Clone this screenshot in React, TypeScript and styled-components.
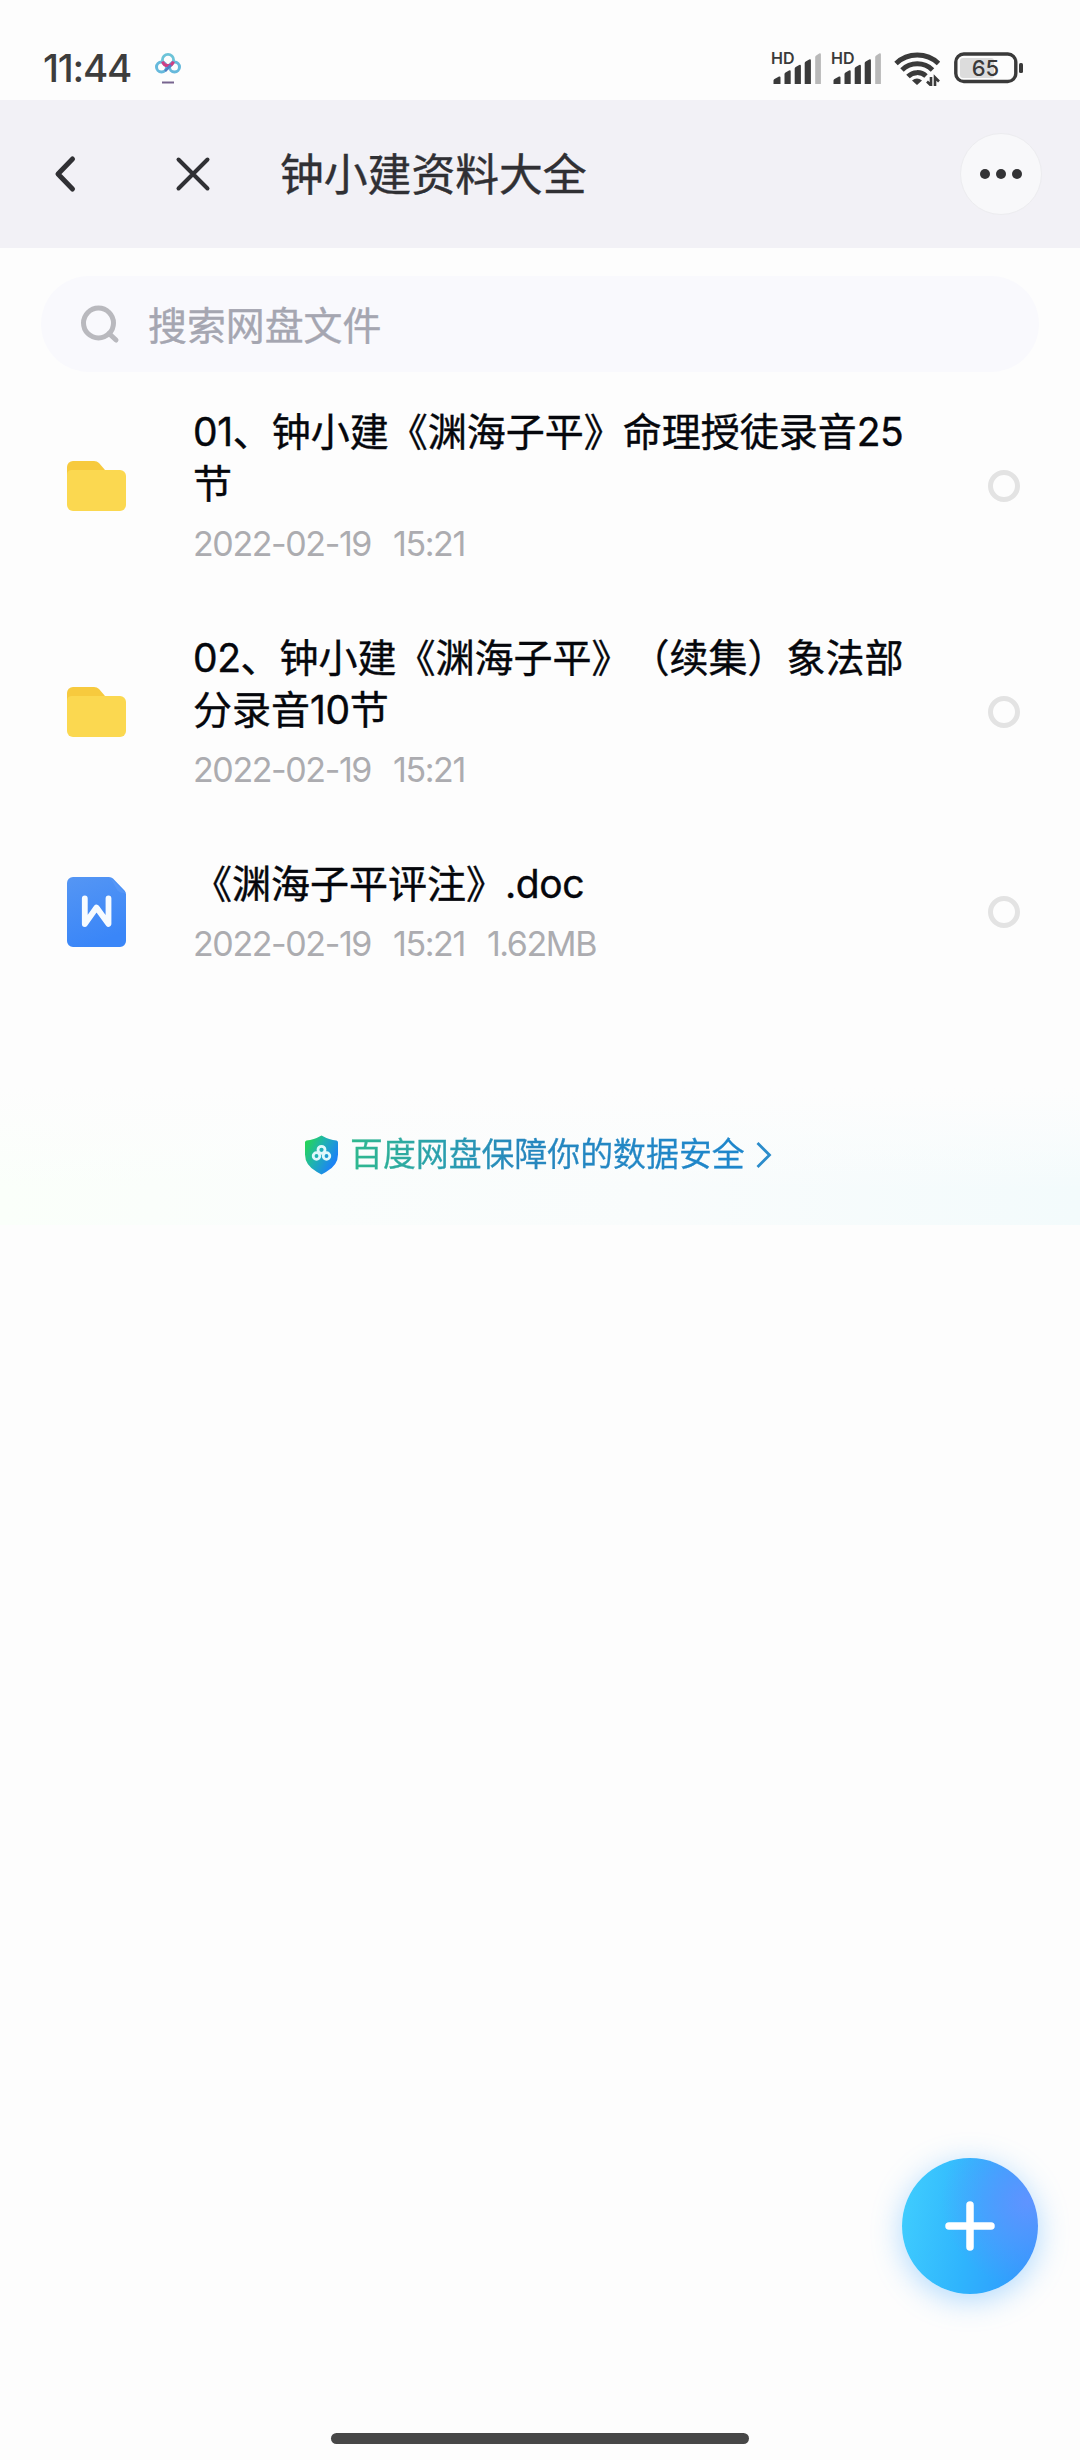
import React from "react";
import styled, { createGlobalStyle } from "styled-components";

const GlobalStyle = createGlobalStyle`
  * { box-sizing: border-box; }
  html, body { margin: 0; padding: 0; background: #fdfdfd; }
`;

const cjk = `"Noto Sans CJK SC", sans-serif`;

const Screen = styled.div`
  width: 1080px;
  height: 2460px;
  display: flex;
  flex-direction: column;
  background: #fdfdfd;
  font-family: ${cjk};
  text-spacing-trim: space-all;
  position: relative;
  overflow: hidden;
`;

const StatusBar = styled.div`
  height: 100px;
  flex: none;
  display: flex;
  align-items: flex-start;
  justify-content: space-between;
  padding: 48px 56px 0 43px;
`;

const StatusGroup = styled.div<{ $gap: number }>`
  display: flex;
  align-items: center;
  gap: ${(p) => p.$gap}px;
  height: 40px;
`;

const Clock = styled.span`
  font: 500 38.5px/40px Inter, sans-serif;
  letter-spacing: -1.2px;
  color: #3d3d3d;
  width: 91px;
  white-space: nowrap;
`;

const Header = styled.header`
  height: 148px;
  flex: none;
  display: flex;
  align-items: center;
  background: #f2f1f6;
  padding: 0 38px 0 45px;
`;

const IconButton = styled.button<{ $ml?: number }>`
  width: 40px;
  height: 48px;
  margin: 0 0 0 ${(p) => p.$ml ?? 0}px;
  padding: 0;
  border: 0;
  background: none;
  display: flex;
  align-items: center;
  justify-content: center;
`;

const PageTitle = styled.h1`
  margin: 0 0 4px 67px;
  flex: 1;
  font-size: 43.8px;
  line-height: 60px;
  font-weight: 400;
  color: #303034;
  -webkit-text-stroke: 0.4px #303034;
`;

const MoreButton = styled.button`
  width: 82px;
  height: 82px;
  border-radius: 50%;
  border: 1px solid #ececef;
  background: #f8f8fa;
  padding: 0;
  display: flex;
  align-items: center;
  justify-content: center;
  gap: 6px;
`;

const Dot = styled.i`
  width: 10px;
  height: 10px;
  border-radius: 50%;
  background: #333335;
`;

const SearchBox = styled.div`
  height: 96px;
  flex: none;
  margin: 28px 41px 0;
  padding: 0 38px;
  border-radius: 48px;
  background: #f9f9fd;
  display: flex;
  align-items: center;
  gap: 27px;
`;

const Placeholder = styled.span`
  margin-bottom: 3px;
  font-size: 38.9px;
  line-height: 50px;
  color: #a5a6b1;
  -webkit-text-stroke: 0.4px #a5a6b1;
`;

const FileList = styled.ul`
  list-style: none;
  margin: 1px 0 0;
  padding: 0;
  flex: none;
`;

const FileRow = styled.li`
  display: flex;
  align-items: center;
  padding: 30px 60px 33px 67px;
`;

const FileIcon = styled.div`
  width: 60px;
  flex: none;
  display: flex;
  margin: 3px 66px 0 0;
`;

const FileBody = styled.div`
  width: 725px;
  margin-right: auto;
`;

const FileName = styled.div`
  font-size: 39px;
  line-height: 52px;
  color: #05070c;
  -webkit-text-stroke: 0.4px #05070c;
`;

const Latin = styled.span`
  font-family: Inter, sans-serif;
  font-size: 39px;
  letter-spacing: -0.4px;
  line-height: 1;
`;

const FileMeta = styled.div`
  display: flex;
  gap: 22px;
  margin-top: 15px;
  height: 44px;
  font: 400 34px/44px Inter, sans-serif;
  letter-spacing: -1.4px;
  color: #acacb0;
`;

const Radio = styled.span`
  width: 32px;
  height: 32px;
  flex: none;
  margin-top: 3px;
  border-radius: 50%;
  border: 5px solid #e3e3e3;
`;

const SafetyBanner = styled.div`
  height: 137px;
  flex: none;
  margin-top: 89px;
  padding: 47px 0 0 304px;
  display: flex;
  align-items: flex-start;
  background: linear-gradient(180deg, #fdfdfd 0%, rgba(253, 253, 253, 0) 75%),
    linear-gradient(90deg, #fafffa 0%, #fafdfc 28%, #f9fcfc 60%, #f3fbfc 100%);
`;

const SafetyText = styled.span`
  margin: -5px 0 0 11px;
  font-size: 32.9px;
  line-height: 44px;
  color: transparent;
  -webkit-text-stroke: 0.3px transparent;
  background: linear-gradient(90deg, #2fb98e 0%, #2a9db0 25%, #2787bd 42%, #1d86cc 100%);
  background-clip: text;
  -webkit-background-clip: text;
`;

const Chevron = styled.svg`
  margin: 6px 0 0 10px;
`;

const Fab = styled.button`
  position: absolute;
  left: 902px;
  top: 2158px;
  width: 136px;
  height: 136px;
  padding: 0;
  border: 0;
  border-radius: 50%;
  background: radial-gradient(circle at 92% 32%, #5f94ff 0%, rgba(86, 150, 255, 0) 55%),
    linear-gradient(100deg, #41cffe 0%, #2fb4fd 50%, #2f93fd 100%);
  box-shadow: 0 6px 30px rgba(60, 165, 255, 0.4);
  display: flex;
  align-items: center;
  justify-content: center;
`;

const HomeBar = styled.div`
  width: 418px;
  height: 11px;
  margin: auto auto 16px;
  border-radius: 6px;
  background: #474747;
`;

const NetdiskGlyph = () => (
  <svg width="28" height="34" viewBox="0 0 28 34" fill="none">
    <circle cx="7.5" cy="16" r="5" stroke="#66b9dc" strokeWidth="3" />
    <circle cx="20.5" cy="16" r="5" stroke="#66b9dc" strokeWidth="3" />
    <circle cx="14" cy="9" r="5.6" stroke="#6cc3d8" strokeWidth="2.8" />
    <path d="M8.6 10.5a5.6 5.6 0 0 0 10.8 0" stroke="#cf3d84" strokeWidth="3" />
    <path d="M11 20l6-6" stroke="#4f7fc4" strokeWidth="2.6" />
    <path d="M8 31.500h12" stroke="#77648f" strokeWidth="2" />
  </svg>
);

const SignalIcon = () => (
  <svg width="54" height="52" viewBox="-1 -8 54 52">
    <text x="0" y="14" fontFamily="Inter, sans-serif" fontWeight="600" fontSize="16" fill="#3a3a3a">HD</text>
    <path d="M2.500 34v-3.500q0-1 1-1.500l4.500-2.500q1.500-.5 1.500 1V34z" fill="#3a3a3a" />
    <path d="M13.500 34V24q0-1 1-1.500l3.500-2q1.700-.7 1.700 1V34z" fill="#3a3a3a" />
    <path d="M23.700 34V18.500q0-1 1-1.500l3.500-2q1.700-.7 1.700 1V34z" fill="#3a3a3a" />
    <path d="M33.700 34V13q0-1 1-1.500l3.500-2q1.700-.7 1.700 1V34z" fill="#3a3a3a" />
    <path d="M44.200 34V7q0-1 1-1.500l3-2q1.700-.7 1.700 1V34z" fill="#b9b9b9" />
  </svg>
);

const WifiIcon = () => (
  <svg width="48" height="36" viewBox="0 0 48 36" fill="none" stroke="#3a3a3a">
    <path d="M2 13.500A31 31 0 0 1 44.500 13.500" strokeWidth="5" />
    <path d="M8 20A22 22 0 0 1 38.500 20" strokeWidth="5" />
    <path d="M14 26.500A13 13 0 0 1 32 26" strokeWidth="5" />
    <path d="M18 30.500q5-4 10 0l-5 4.500z" fill="#3a3a3a" stroke="none" />
    <path d="M37 27v8.500l-4-4M41 36v-8.500l4 4" strokeWidth="2.600" />
  </svg>
);

const BatteryIcon = () => (
  <svg width="70" height="32" viewBox="0 0 70 32">
    <rect x="6" y="6" width="34" height="20" rx="3" fill="#dcdcdc" />
    <rect x="1.800" y="2" width="60" height="27.500" rx="8" fill="none" stroke="#3a3a3a" strokeWidth="3.400" />
    <rect x="65" y="11" width="4" height="10" rx="1.500" fill="#3a3a3a" />
    <text x="31.500" y="24" textAnchor="middle" fontFamily="Inter, sans-serif" fontWeight="500" fontSize="22" fill="#3a3a3a">65</text>
  </svg>
);

const StatusIcons = styled.div`
  display: flex;
  align-items: center;
  height: 40px;
  gap: 6px;

  svg:nth-child(3) { margin-left: 4px; }
  svg:nth-child(4) { margin-left: 6px; }
`;

const FolderIcon = () => (
  <svg width="60" height="52" viewBox="0 0 60 52">
    <path d="M0 7a6 6 0 0 1 6-6h21q3 0 5 2l6 7v14H0z" fill="#f7ca3e" />
    <path d="M0 15q0-5 5-5h48a6 6 0 0 1 6 6v29a6 6 0 0 1-6 6H6a6 6 0 0 1-6-6z" fill="#fbd850" />
  </svg>
);

const DocIcon = () => (
  <svg width="60" height="72" viewBox="0 0 60 72">
    <defs>
      <linearGradient id="doc" x1="0" y1="0" x2="0.300" y2="1">
        <stop offset="0" stopColor="#5596f4" />
        <stop offset="1" stopColor="#3a86f8" />
      </linearGradient>
    </defs>
    <path d="M0 7a6 6 0 0 1 6-6h36q2.500 0 4 1.500l11.500 12q1.500 1.500 1.500 4V65a6 6 0 0 1-6 6H6a6 6 0 0 1-6-6z" fill="url(#doc)" />
    <path d="M43 1.200l15.500 15.800q-5 .5-8-2.500z" fill="#6ba3f8" opacity=".35" />
    <path d="M17.800 22.500v25.500L29.500 31.500 41.500 48V22.500" fill="none" stroke="#f6fbff" strokeWidth="5.800" strokeLinejoin="round" strokeLinecap="round" />
  </svg>
);

const ShieldIcon = () => (
  <svg width="35" height="40" viewBox="0 0 35 40">
    <defs>
      <linearGradient id="shield" x1="0.050" y1="0.200" x2="0.850" y2="0.700">
        <stop offset="0" stopColor="#26d35c" />
        <stop offset="0.450" stopColor="#1fb3b0" />
        <stop offset="1" stopColor="#1c84f4" />
      </linearGradient>
    </defs>
    <path d="M17.500 .5q8 4.500 15 5 1.500.3 1.500 2v12q0 11-12 17.500l-4.500 2.500-4.500-2.500Q1 30.500 1 19.500v-12q0-1.700 1.500-2 7-.5 15-5z" fill="url(#shield)" />
    <g fill="none" stroke="#dff8fb" strokeWidth="2.800">
      <circle cx="17.500" cy="14.800" r="3.500" />
      <circle cx="12.500" cy="21" r="3.300" />
      <circle cx="22.500" cy="21" r="3.300" />
    </g>
  </svg>
);

type FileItem = { kind: "folder" | "doc"; name: string; meta: string[] };

const files: FileItem[] = [
  { kind: "folder", name: "01、钟小建《渊海子平》命理授徒录音25节", meta: ["2022-02-19", "15:21"] },
  { kind: "folder", name: "02、钟小建《渊海子平》（续集）象法部分录音10节", meta: ["2022-02-19", "15:21"] },
  { kind: "doc", name: "《渊海子平评注》.doc", meta: ["2022-02-19", "15:21", "1.62MB"] },
];

const MixedText = ({ text }: { text: string }) => (
  <>
    {text.split(/([\x21-\x7e]+)/).map((part, i) =>
      i % 2 ? <Latin key={i}>{part}</Latin> : <React.Fragment key={i}>{part}</React.Fragment>
    )}
  </>
);

export default function App() {
  return (
    <Screen>
      <GlobalStyle />
      <StatusBar>
        <StatusGroup $gap={20}>
          <Clock>11:44</Clock>
          <NetdiskGlyph />
        </StatusGroup>
        <StatusIcons>
          <SignalIcon />
          <SignalIcon />
          <WifiIcon />
          <BatteryIcon />
        </StatusIcons>
      </StatusBar>
      <Header>
        <IconButton aria-label="返回">
          <svg width="24" height="38" viewBox="0 0 24 38" fill="none">
            <path d="M19.500 4L5 19l14.500 15" stroke="#303034" strokeWidth="5" strokeLinecap="round" strokeLinejoin="round" />
          </svg>
        </IconButton>
        <IconButton $ml={88} aria-label="关闭">
          <svg width="36" height="36" viewBox="0 0 36 36" fill="none">
            <path d="M3.500 3.500l29 29M32.500 3.500l-29 29" stroke="#303034" strokeWidth="4" strokeLinecap="round" />
          </svg>
        </IconButton>
        <PageTitle>钟小建资料大全</PageTitle>
        <MoreButton aria-label="更多">
          <Dot />
          <Dot />
          <Dot />
        </MoreButton>
      </Header>
      <SearchBox>
        <svg width="42" height="42" viewBox="0 0 42 42" fill="none" stroke="#b9b9be" strokeWidth="5">
          <circle cx="19.500" cy="20" r="15" />
          <path d="M30 30.500l7 6.500" strokeLinecap="round" />
        </svg>
        <Placeholder>搜索网盘文件</Placeholder>
      </SearchBox>
      <FileList>
        {files.map((f) => (
          <FileRow key={f.name}>
            <FileIcon>{f.kind === "folder" ? <FolderIcon /> : <DocIcon />}</FileIcon>
            <FileBody>
              <FileName>
                <MixedText text={f.name} />
              </FileName>
              <FileMeta>
                {f.meta.map((m) => (
                  <span key={m}>{m}</span>
                ))}
              </FileMeta>
            </FileBody>
            <Radio />
          </FileRow>
        ))}
      </FileList>
      <SafetyBanner>
        <ShieldIcon />
        <SafetyText>百度网盘保障你的数据安全</SafetyText>
        <Chevron width="17" height="28" viewBox="0 0 17 28" fill="none">
          <path d="M2.500 2L14.500 14 2.500 26" stroke="#2b8ccb" strokeWidth="2.800" />
        </Chevron>
      </SafetyBanner>
      <Fab aria-label="添加">
        <svg width="52" height="52" viewBox="0 0 52 52">
          <path d="M26 5v42M5 26h42" stroke="#fff" strokeWidth="7.500" strokeLinecap="round" />
        </svg>
      </Fab>
      <HomeBar />
    </Screen>
  );
}
